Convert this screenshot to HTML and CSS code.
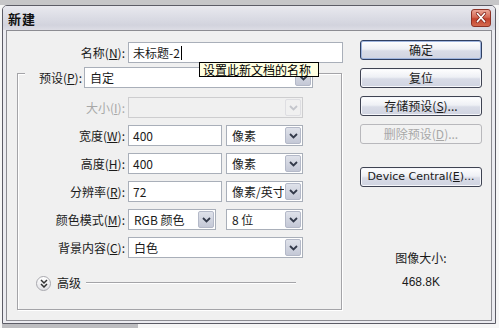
FILE: index.html
```html
<!DOCTYPE html>
<html lang="zh-CN">

<head>
    <meta charset="UTF-8">
    <meta name="viewport" content="width=device-width, initial-scale=1.0">
    <title>新建</title>
    <link rel="stylesheet" href="styles.css">
</head>

<body>
    <div class="dialog">
        <div class="titlebar">
            <span class="title">新建</span>
            <span class="close">
                <svg width="20" height="18" viewBox="0 0 20 18">
                    <path d="M6 4 L14 13 M14 4 L6 13" stroke="#7a2018" stroke-width="3.4" stroke-linecap="round" />
                    <path d="M6 4 L14 13 M14 4 L6 13" stroke="#fff" stroke-width="1.8" stroke-linecap="round" />
                </svg>
            </span>
        </div>

        <div class="body">
            <div class="main">
                <div class="name-row">
                    <label class="lbl name-lbl">名称(<u>N</u>):</label>
                    <div class="input name-input">未标题-2<span class="caret"></span></div>
                </div>

                <div class="group">
                    <div class="preset-row">
                        <label class="lbl preset-lbl">预设(<u>P</u>):</label>
                        <div class="select preset">
                            <span class="val">自定</span>
                            <span class="arrow"><svg width="9" height="6" viewBox="0 0 9 6"><path d="M1 1 L4.5 4.5 L8 1" fill="none" stroke="#333a4a" stroke-width="1.8" /></svg></span>
                        </div>
                    </div>

                    <div class="form">
                        <label class="lbl disabled">大小(<u>I</u>):</label>
                        <div class="select wide off">
                            <span class="val"></span>
                            <span class="arrow"><svg width="9" height="6" viewBox="0 0 9 6"><path d="M1 1 L4.5 4.5 L8 1" fill="none" stroke="#c4c6cc" stroke-width="1.8" /></svg></span>
                        </div>

                        <label class="lbl">宽度(<u>W</u>):</label>
                        <div class="pair">
                            <div class="input num">400</div>
                            <div class="select unit">
                                <span class="val">像素</span>
                                <span class="arrow"><svg width="9" height="6" viewBox="0 0 9 6"><path d="M1 1 L4.5 4.5 L8 1" fill="none" stroke="#333a4a" stroke-width="1.8" /></svg></span>
                            </div>
                        </div>

                        <label class="lbl">高度(<u>H</u>):</label>
                        <div class="pair">
                            <div class="input num">400</div>
                            <div class="select unit">
                                <span class="val">像素</span>
                                <span class="arrow"><svg width="9" height="6" viewBox="0 0 9 6"><path d="M1 1 L4.5 4.5 L8 1" fill="none" stroke="#333a4a" stroke-width="1.8" /></svg></span>
                            </div>
                        </div>

                        <label class="lbl">分辨率(<u>R</u>):</label>
                        <div class="pair">
                            <div class="input num">72</div>
                            <div class="select unit">
                                <span class="val">像素/英寸</span>
                                <span class="arrow"><svg width="9" height="6" viewBox="0 0 9 6"><path d="M1 1 L4.5 4.5 L8 1" fill="none" stroke="#333a4a" stroke-width="1.8" /></svg></span>
                            </div>
                        </div>

                        <label class="lbl">颜色模式(<u>M</u>):</label>
                        <div class="pair">
                            <div class="select mode">
                                <span class="val">RGB 颜色</span>
                                <span class="arrow"><svg width="9" height="6" viewBox="0 0 9 6"><path d="M1 1 L4.5 4.5 L8 1" fill="none" stroke="#333a4a" stroke-width="1.8" /></svg></span>
                            </div>
                            <div class="select unit">
                                <span class="val">8 位</span>
                                <span class="arrow"><svg width="9" height="6" viewBox="0 0 9 6"><path d="M1 1 L4.5 4.5 L8 1" fill="none" stroke="#333a4a" stroke-width="1.8" /></svg></span>
                            </div>
                        </div>

                        <label class="lbl">背景内容(<u>C</u>):</label>
                        <div class="select wide">
                            <span class="val">白色</span>
                            <span class="arrow"><svg width="9" height="6" viewBox="0 0 9 6"><path d="M1 1 L4.5 4.5 L8 1" fill="none" stroke="#333a4a" stroke-width="1.8" /></svg></span>
                        </div>
                    </div>

                    <div class="advanced">
                        <span class="chev">
                            <svg width="8" height="9" viewBox="0 0 8 9"><path d="M1 1 L4 4 L7 1 M1 5 L4 8 L7 5" fill="none" stroke="#333" stroke-width="1.5" /></svg>
                        </span>
                        <span class="adv-text">高级</span>
                        <span class="adv-line"></span>
                    </div>
                </div>
            </div>

            <div class="side">
                <div class="btn default">确定</div>
                <div class="btn">复位</div>
                <div class="btn">存储预设(<u>S</u>)...</div>
                <div class="btn disabled">删除预设(<u>D</u>)...</div>
                <div class="btn device">Device Central(<u>E</u>)...</div>
                <div class="size-title">图像大小:</div>
                <div class="size-val">468.8K</div>
            </div>
        </div>

        <div class="tooltip">设置此新文档的名称</div>
    </div>
    <div class="strip"></div>
</body>

</html>
```

FILE: styles.css
```css
* {
    margin: 0;
    padding: 0;
    box-sizing: border-box;
}

html,
body {
    width: 499px;
    height: 328px;
    overflow: hidden;
}

body {
    background: linear-gradient(#c6c6c8 0, #c6c6c8 5px, #f6f6f6 5px);
    font-family: "Liberation Sans", "Noto Sans CJK SC", sans-serif;
    font-size: 12px;
    color: #1a1a1a;
    padding: 5px 0 0 2px;
}

u {
    text-decoration: underline;
    text-decoration-thickness: 1px;
    text-underline-offset: 1px;
}

.dialog {
    position: relative;
    width: 494px;
    height: 319px;
    border: 1px solid #5c5c66;
    border-radius: 5px 5px 0 0;
    background: #ebebf0;
    padding: 0 3px 2px 3px;
    display: flex;
    flex-direction: column;
}

.titlebar {
    height: 24px;
    margin: 0 -3px;
    padding: 0 4px 0 5px;
    border-radius: 4px 4px 0 0;
    background: linear-gradient(#e9e9ef, #d9dae3 55%, #d2d3dd 80%, #dddde5);
    display: flex;
    align-items: center;
    justify-content: space-between;
}

.title {
    font-family: "Noto Sans CJK SC", sans-serif;
    font-weight: bold;
    font-size: 13px;
    letter-spacing: 1px;
    color: #111;
    margin-top: 1px;
}

.close {
    width: 20px;
    height: 18px;
    border: 1px solid #8e3226;
    border-radius: 3px;
    background: linear-gradient(#eaa596, #d66a55 45%, #c2412c 55%, #d46a50);
    display: flex;
    align-items: center;
    justify-content: center;
}

.close svg {
    display: block;
}

.body {
    flex: 1;
    border: 1px solid #8c8c92;
    background: #f0f0f0;
    padding-top: 11px;
    display: flex;
}

.main {
    width: 336px;
}

.lbl {
    display: block;
    text-align: right;
    line-height: 21px;
    white-space: nowrap;
    font-family: "Noto Sans CJK SC", sans-serif;
}

.lbl.disabled {
    color: #a8a8a8;
}

.name-row {
    display: flex;
}

.name-lbl {
    width: 118px;
    margin-right: 3px;
}

.input {
    height: 21px;
    border: 1px solid #a9afb9;
    background: #fff;
    padding-left: 4px;
    line-height: 19px;
    font-family: "Noto Sans CJK SC", sans-serif;
    white-space: nowrap;
}

.name-input {
    width: 215px;
    display: flex;
    align-items: center;
}

.caret {
    width: 1px;
    height: 14px;
    background: #000;
    margin-left: 1px;
}

.group {
    margin: 10px 0 0 10px;
    width: 325px;
    border: 1px solid #a4a4a8;
    box-shadow: inset 1px 1px #fff, 1px 1px #fff;
    padding-bottom: 19px;
}

.preset-row {
    display: flex;
    margin-top: -7px;
}

.preset-lbl {
    width: 59px;
    margin-left: 7px;
    padding-right: 2px;
    background: #f0f0f0;
}

.select {
    height: 21px;
    border: 1px solid #a9afb9;
    background: #fff;
    display: flex;
    align-items: stretch;
    font-family: "Noto Sans CJK SC", sans-serif;
}

.select .val {
    flex: 1;
    padding-left: 5px;
    line-height: 19px;
    white-space: nowrap;
    overflow: hidden;
}

.select .arrow {
    width: 16px;
    margin: 1px;
    border: 1px solid #b4b9c8;
    border-radius: 2px;
    background: linear-gradient(#dfe2ea, #c4c8d6);
    display: flex;
    align-items: center;
    justify-content: center;
}

.preset {
    width: 229px;
}

.select.off {
    background: #f0f0f0;
    border-color: #cdcdcf;
}

.select.off .arrow {
    background: #f0f0f0;
    border-color: #dedee2;
}

.form {
    margin-top: 9px;
    display: grid;
    grid-template-columns: 107px 175px;
    column-gap: 3px;
    row-gap: 7px;
}

.wide {
    width: 175px;
}

.pair {
    display: flex;
    justify-content: space-between;
    width: 175px;
}

.num {
    width: 94px;
}

.unit {
    width: 77px;
}

.mode {
    width: 88px;
}

.advanced {
    margin: 18px 0 0 18px;
    display: flex;
    align-items: center;
    height: 14px;
}

.chev {
    width: 15px;
    height: 15px;
    border: 1px solid #a8a8ae;
    border-radius: 50%;
    background: linear-gradient(#ffffff, #e2e2e6);
    display: flex;
    align-items: center;
    justify-content: center;
}

.adv-text {
    margin-left: 6px;
    font-family: "Noto Sans CJK SC", sans-serif;
    line-height: 14px;
}

.adv-line {
    margin-left: 5px;
    width: 210px;
    height: 2px;
    border-top: 1px solid #a4a4a8;
    border-bottom: 1px solid #fff;
}

.side {
    margin: -2px 0 0 17px;
    width: 122px;
    display: flex;
    flex-direction: column;
    gap: 8px;
}

.btn {
    height: 20px;
    border: 1px solid #3f4352;
    border-radius: 3px;
    background: linear-gradient(#ffffff, #eef0f5 45%, #d9dce7 55%, #d0d4e1);
    box-shadow: inset 0 0 0 1px #f6f7fb;
    text-align: center;
    line-height: 18px;
    font-family: "Noto Sans CJK SC", sans-serif;
    white-space: nowrap;
}

.btn.default {
    border-color: #2f3f62;
    box-shadow: inset 0 0 0 1px #9fb5de;
}

.btn.disabled {
    border-color: #b8b8bc;
    background: #f2f2f2;
    box-shadow: none;
    color: #a8a8a8;
}

.btn.device {
    margin-top: 15px;
    font-family: "DejaVu Sans", "Noto Sans CJK SC", sans-serif;
    font-size: 11px;
}

.size-title {
    margin-top: 55px;
    text-align: center;
    line-height: 16px;
    font-family: "Noto Sans CJK SC", sans-serif;
}

.size-val {
    text-align: center;
    line-height: 16px;
}

.tooltip {
    position: absolute;
    left: 196px;
    top: 56px;
    width: 120px;
    height: 15px;
    border: 1px solid #000;
    background: #ffffe1;
    padding-left: 3px;
    line-height: 13px;
    font-family: "Noto Sans CJK SC", sans-serif;
    white-space: nowrap;
    color: #000;
}

.strip {
    width: 136px;
    height: 5px;
    background: #bdbdc0;
}
```
